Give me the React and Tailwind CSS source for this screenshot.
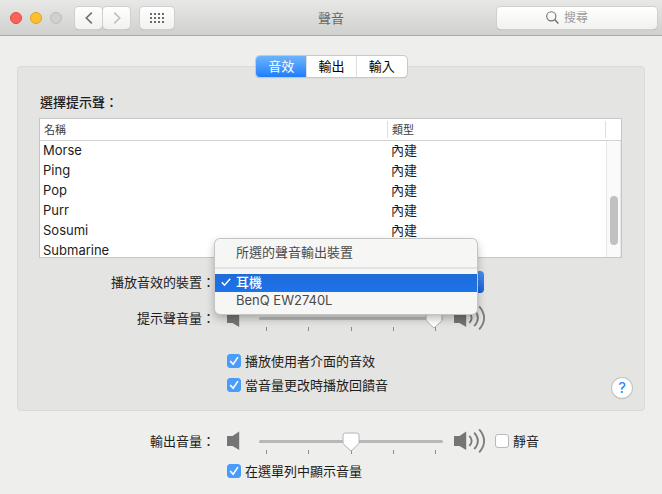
import React, { useState } from 'react';

const TABS = ['音效', '輸出', '輸入'];
const SOUNDS = ['Morse', 'Ping', 'Pop', 'Purr', 'Sosumi', 'Submarine'];
const DEVICES = ['耳機', 'BenQ EW2740L'];
const TICKS = [0, 1, 2, 3, 4];

const SpeakerIcon = ({ loud }) => (
    <svg
        width={loud ? 32 : 13}
        height="26"
        viewBox={loud ? '0 0 32 26' : '0 0 13 26'}
        className="shrink-0"
        aria-hidden="true"
    >
        <path d="M0 8.5Q0 8 .5 8H5.5L12.2 3.5V22L5.5 18H.5Q0 18 0 17.5Z" fill="#757575" />
        {loud && (
            <g fill="none" stroke="#7c7c7c" strokeWidth="1.8">
                <path d="M15.3 7.8Q20 12.9 15.3 18" />
                <path d="M20.2 4.6Q27.6 12.9 20.2 21.2" />
                <path d="M25.2 1.4Q35 12.9 25.2 24.4" />
            </g>
        )}
    </svg>
);

const VolumeSlider = ({ id, value, onChange }) => (
    <div className="relative ml-[19px] h-[26px] w-[184px]">
        <div className="mt-[12px] h-[3px] rounded-full bg-[#b8b8b8]" />
        <div className="mx-[7px] mt-[7px] flex justify-between">
            {TICKS.map((tick) => (
                <span key={tick} className="h-[4px] w-px bg-[#8c8c8c]" />
            ))}
        </div>
        <div className="absolute inset-x-[7px] top-0">
            <svg
                width="18"
                height="22"
                viewBox="0 0 18 22"
                className="absolute top-[4px] -translate-x-1/2"
                style={{ left: `${value}%` }}
                aria-hidden="true"
            >
                <path
                    d="M3.5 1H14.5Q17 1 17 3.5V10Q17 11.5 16 12.6L9 19L2 12.6Q1 11.5 1 10V3.5Q1 1 3.5 1Z"
                    fill="#fff"
                    stroke="#b4b4b4"
                />
            </svg>
        </div>
        <input
            id={id}
            type="range"
            min="0"
            max="100"
            value={value}
            onChange={(e) => onChange(Number(e.target.value))}
            className="absolute inset-0 h-full w-full opacity-0"
        />
    </div>
);

const Checkbox = ({ label, checked, onChange }) => (
    <label className="flex h-[20px] items-center gap-1">
        <span className="relative flex">
            <input
                type="checkbox"
                checked={checked}
                onChange={(e) => onChange(e.target.checked)}
                className="h-[14px] w-[14px] appearance-none rounded-[3px] border border-[#b9b9b9] bg-white checked:border-[#4a9cfb] checked:bg-[#4a9cfb]"
            />
            {checked && (
                <svg width="14" height="14" viewBox="0 0 14 14" className="pointer-events-none absolute inset-0" aria-hidden="true">
                    <path d="M3.6 7.4L6.1 10.3L10.6 3.6" fill="none" stroke="#fff" strokeWidth="1.6" strokeLinecap="round" strokeLinejoin="round" />
                </svg>
            )}
        </span>
        {label}
    </label>
);

const TitleBar = () => {
    const [query, setQuery] = useState('');
    const button = 'flex h-[22px] items-center justify-center rounded-[4px] bg-gradient-to-b from-white to-[#f1f1f0] shadow-[0_0_0_1px_#cfcfce,0_1px_1px_#9f9f9f]';

    return (
        <header className="grid h-[36px] grid-cols-[1fr_auto_1fr] items-center border-b border-[#a9a9a8] bg-gradient-to-b from-[#e8e8e7] to-[#d0d0cf]">
            <div className="flex items-center">
                <div className="ml-[10px] flex gap-2">
                    <button aria-label="關閉" className="h-[12px] w-[12px] rounded-full border border-[#e2473f] bg-[#fc645a]" />
                    <button aria-label="最小化" className="h-[12px] w-[12px] rounded-full border border-[#dfa023] bg-[#fcc02f]" />
                    <button aria-label="縮放" disabled className="h-[12px] w-[12px] rounded-full border border-[#bdbdbc] bg-[#d0d0cf]" />
                </div>
                <div className="ml-[13px] flex gap-px">
                    <button aria-label="返回" className={`${button} w-[27px]`}>
                        <svg width="8" height="12" viewBox="0 0 8 12" fill="none" stroke="#6e6e6e" strokeWidth="1.6" aria-hidden="true">
                            <path d="M6.8 .7L1.3 6L6.8 11.3" />
                        </svg>
                    </button>
                    <button aria-label="前進" disabled className={`${button} w-[27px]`}>
                        <svg width="8" height="12" viewBox="0 0 8 12" fill="none" stroke="#bfbfbf" strokeWidth="1.6" aria-hidden="true">
                            <path d="M1.2 .7L6.7 6L1.2 11.3" />
                        </svg>
                    </button>
                </div>
                <button aria-label="顯示全部" className={`${button} ml-[10px] w-[34px]`}>
                    <svg width="14" height="10" viewBox="0 0 14 10" fill="#6b6b6b" aria-hidden="true">
                        {[0, 4, 8].map((y) =>
                            [0, 4, 8, 12].map((x) => <rect key={`${x}-${y}`} x={x} y={y} width="2" height="2" />)
                        )}
                    </svg>
                </button>
            </div>
            <h1 className="text-[#6a6a6a]">聲音</h1>
            <div className={`${button} mr-[5px] w-[160px] justify-self-end`}>
                <svg width="13" height="13" viewBox="0 0 13 13" fill="none" stroke="#6e6e6e" strokeWidth="1.1" className="ml-[49px] shrink-0" aria-hidden="true">
                    <circle cx="5.3" cy="5.3" r="4.6" />
                    <path d="M8.6 8.6L12.4 12.4" strokeWidth="1.4" />
                </svg>
                <input
                    type="search"
                    aria-label="搜尋"
                    placeholder="搜尋"
                    value={query}
                    onChange={(e) => setQuery(e.target.value)}
                    className="ml-[5px] min-w-0 flex-1 bg-transparent text-[12px] outline-none placeholder:text-[#9c9c9c]"
                />
            </div>
        </header>
    );
};

const SoundTable = () => (
    <div className="mr-[22px] ml-[21px] mt-[6px] flex h-[140px] overflow-hidden border border-[#c6c6c6] bg-white">
        <div className="min-w-0 flex-1">
            <table className="w-full table-fixed border-separate border-spacing-0 text-left">
                <thead>
                    <tr className="text-[11px] text-[#3c3c3c]">
                        <th className="h-[22px] w-[348px] border-b border-[#d2d2d2] p-0 font-normal">
                            <div className="flex h-[17px] items-center border-r border-[#dedede] pl-[4px]">名稱</div>
                        </th>
                        <th className="h-[22px] border-b border-[#d2d2d2] p-0 font-normal">
                            <div className="flex h-[17px] items-center border-r border-[#dedede] pl-[4px]">類型</div>
                        </th>
                    </tr>
                </thead>
                <tbody>
                    {SOUNDS.map((name) => (
                        <tr key={name} className="leading-[18px]">
                            <td className="p-0 pb-[2px] pl-[3px]">{name}</td>
                            <td className="p-0 pb-[2px] pl-[3px]">內建</td>
                        </tr>
                    ))}
                </tbody>
            </table>
        </div>
        <div className="flex w-[15px] flex-col">
            <div className="h-[22px] border-b border-[#d2d2d2]" />
            <div className="flex-1 border-x border-[#e7e7e7] bg-[#fafafa]">
                <div className="mx-auto mt-[55px] h-[49px] w-[8px] rounded-full bg-[#c1c1c1]" />
            </div>
        </div>
    </div>
);

const DevicePicker = () => {
    const [device, setDevice] = useState(DEVICES[0]);
    const [open, setOpen] = useState(true);

    const openMenu = (e) => {
        e.preventDefault();
        setOpen(true);
    };

    return (
        <div className="relative w-[267px]">
            <select
                id="device"
                value={device}
                onMouseDown={openMenu}
                onChange={(e) => setDevice(e.target.value)}
                className="block h-[22px] w-full appearance-none rounded-[4px] border border-[#c4c4c4] bg-white pl-[8px]"
            >
                {DEVICES.map((name) => (
                    <option key={name}>{name}</option>
                ))}
            </select>
            <span className="pointer-events-none absolute top-0 right-0 flex h-[22px] w-[18px] items-center justify-center rounded-r-[4px] bg-gradient-to-b from-[#4b93f0] to-[#1a5fd8]">
                <svg width="8" height="12" viewBox="0 0 8 12" fill="none" stroke="#fff" strokeWidth="1.5" aria-hidden="true">
                    <path d="M1 4.2L4 1.2L7 4.2M1 7.8L4 10.8L7 7.8" />
                </svg>
            </span>
            {open && (
                <div className="absolute -top-[32px] -left-[2px] z-10 w-[262px] rounded-[5px] bg-[#f6f6f5] pt-[5px] pb-[4px] shadow-[0_0_0_1px_#c4c4c4,0_4px_10px_rgba(0,0,0,0.3)]">
                    <p className="h-[18px] pl-[21px] leading-[16px] text-[#4a4a4a]">所選的聲音輸出裝置</p>
                    <hr className="my-[5px] h-[2px] border-0 bg-[#e2e2e2]" />
                    {DEVICES.map((name) => (
                        <button
                            key={name}
                            onClick={() => {
                                setDevice(name);
                                setOpen(false);
                            }}
                            className={`flex h-[18px] w-full items-center pb-[2px] leading-[16px] ${
                                name === device
                                    ? 'bg-gradient-to-b from-[#1f6bd8] to-[#1c73ea] font-medium text-white'
                                    : 'text-[#4a4a4a]'
                            }`}
                        >
                            <span className="flex w-[21px] pl-[6px]">
                                {name === device && (
                                    <svg width="10" height="10" viewBox="0 0 10 10" fill="none" stroke="#fff" strokeWidth="1.5" aria-hidden="true">
                                        <path d="M.8 5.2L3.5 8.2L9.2 1.8" />
                                    </svg>
                                )}
                            </span>
                            {name}
                        </button>
                    ))}
                </div>
            )}
        </div>
    );
};

const App = () => {
    const [tab, setTab] = useState(TABS[0]);
    const [alertVolume, setAlertVolume] = useState(99);
    const [outputVolume, setOutputVolume] = useState(50);
    const [playUiSounds, setPlayUiSounds] = useState(true);
    const [playFeedback, setPlayFeedback] = useState(true);
    const [showInMenu, setShowInMenu] = useState(true);
    const [muted, setMuted] = useState(false);

    return (
        <div className="min-h-screen bg-[#eeeeec] font-['Inter','Noto_Sans_CJK_TC',sans-serif] text-[13px] leading-[20px] text-[#1c1c1c]">
            <TitleBar />
            <main className="px-[17px] pt-[30px] pb-[13px]">
                <section className="rounded-[4px] border border-[#dadad9] bg-[#e4e4e2] pb-[11px]">
                    <div className="mx-auto -mt-[11px] flex h-[21px] w-[151px] overflow-hidden rounded-[4px] bg-white shadow-[0_0_0_1px_#c9c9c9,0_1px_1px_#a0a0a0]">
                        {TABS.map((name) => (
                            <button
                                key={name}
                                onClick={() => setTab(name)}
                                className={`flex flex-1 items-center justify-center border-l pb-[2px] ${
                                    name === tab
                                        ? 'border-transparent bg-gradient-to-b from-[#6db3fb] to-[#1a7efb] bg-origin-border text-white'
                                        : 'border-[#dedede] text-black'
                                }`}
                            >
                                {name}
                            </button>
                        ))}
                    </div>

                    <h2 className="mt-[15px] ml-[22px] font-medium">選擇提示聲：</h2>
                    <SoundTable />

                    <div className="mt-[13px] flex items-center">
                        <label htmlFor="device" className="w-[197px] text-right">播放音效的裝置：</label>
                        <div className="ml-[2px]">
                            <DevicePicker />
                        </div>
                    </div>

                    <div className="mt-[12px] flex items-center">
                        <label htmlFor="alert-volume" className="w-[197px] text-right">提示聲音量：</label>
                        <div className="ml-[12px] flex items-center">
                            <SpeakerIcon />
                            <VolumeSlider id="alert-volume" value={alertVolume} onChange={setAlertVolume} />
                            <div className="ml-[11px]">
                                <SpeakerIcon loud />
                            </div>
                        </div>
                    </div>

                    <div className="mt-[20px] mr-[12px] ml-[209px] flex items-end justify-between">
                        <div className="flex flex-col gap-1 pb-1">
                            <Checkbox label="播放使用者介面的音效" checked={playUiSounds} onChange={setPlayUiSounds} />
                            <Checkbox label="當音量更改時播放回饋音" checked={playFeedback} onChange={setPlayFeedback} />
                        </div>
                        <button
                            aria-label="輔助說明"
                            className="mb-px flex h-[20px] w-[20px] items-center justify-center rounded-full bg-white text-[15px] text-[#1a82fb] shadow-[0_0_0_1px_#c4c4c4,0_1px_1px_#a0a0a0]"
                        >
                            ?
                        </button>
                    </div>
                </section>

                <section className="px-px">
                    <div className="mt-[17px] flex items-center">
                        <label htmlFor="output-volume" className="w-[197px] text-right">輸出音量：</label>
                        <div className="ml-[12px] flex items-center">
                            <SpeakerIcon />
                            <VolumeSlider id="output-volume" value={outputVolume} onChange={setOutputVolume} />
                            <div className="mr-[9px] ml-[11px]">
                                <SpeakerIcon loud />
                            </div>
                            <Checkbox label="靜音" checked={muted} onChange={setMuted} />
                        </div>
                    </div>
                    <div className="mt-[7px] ml-[209px]">
                        <Checkbox label="在選單列中顯示音量" checked={showInMenu} onChange={setShowInMenu} />
                    </div>
                </section>
            </main>
        </div>
    );
};

export default App;
